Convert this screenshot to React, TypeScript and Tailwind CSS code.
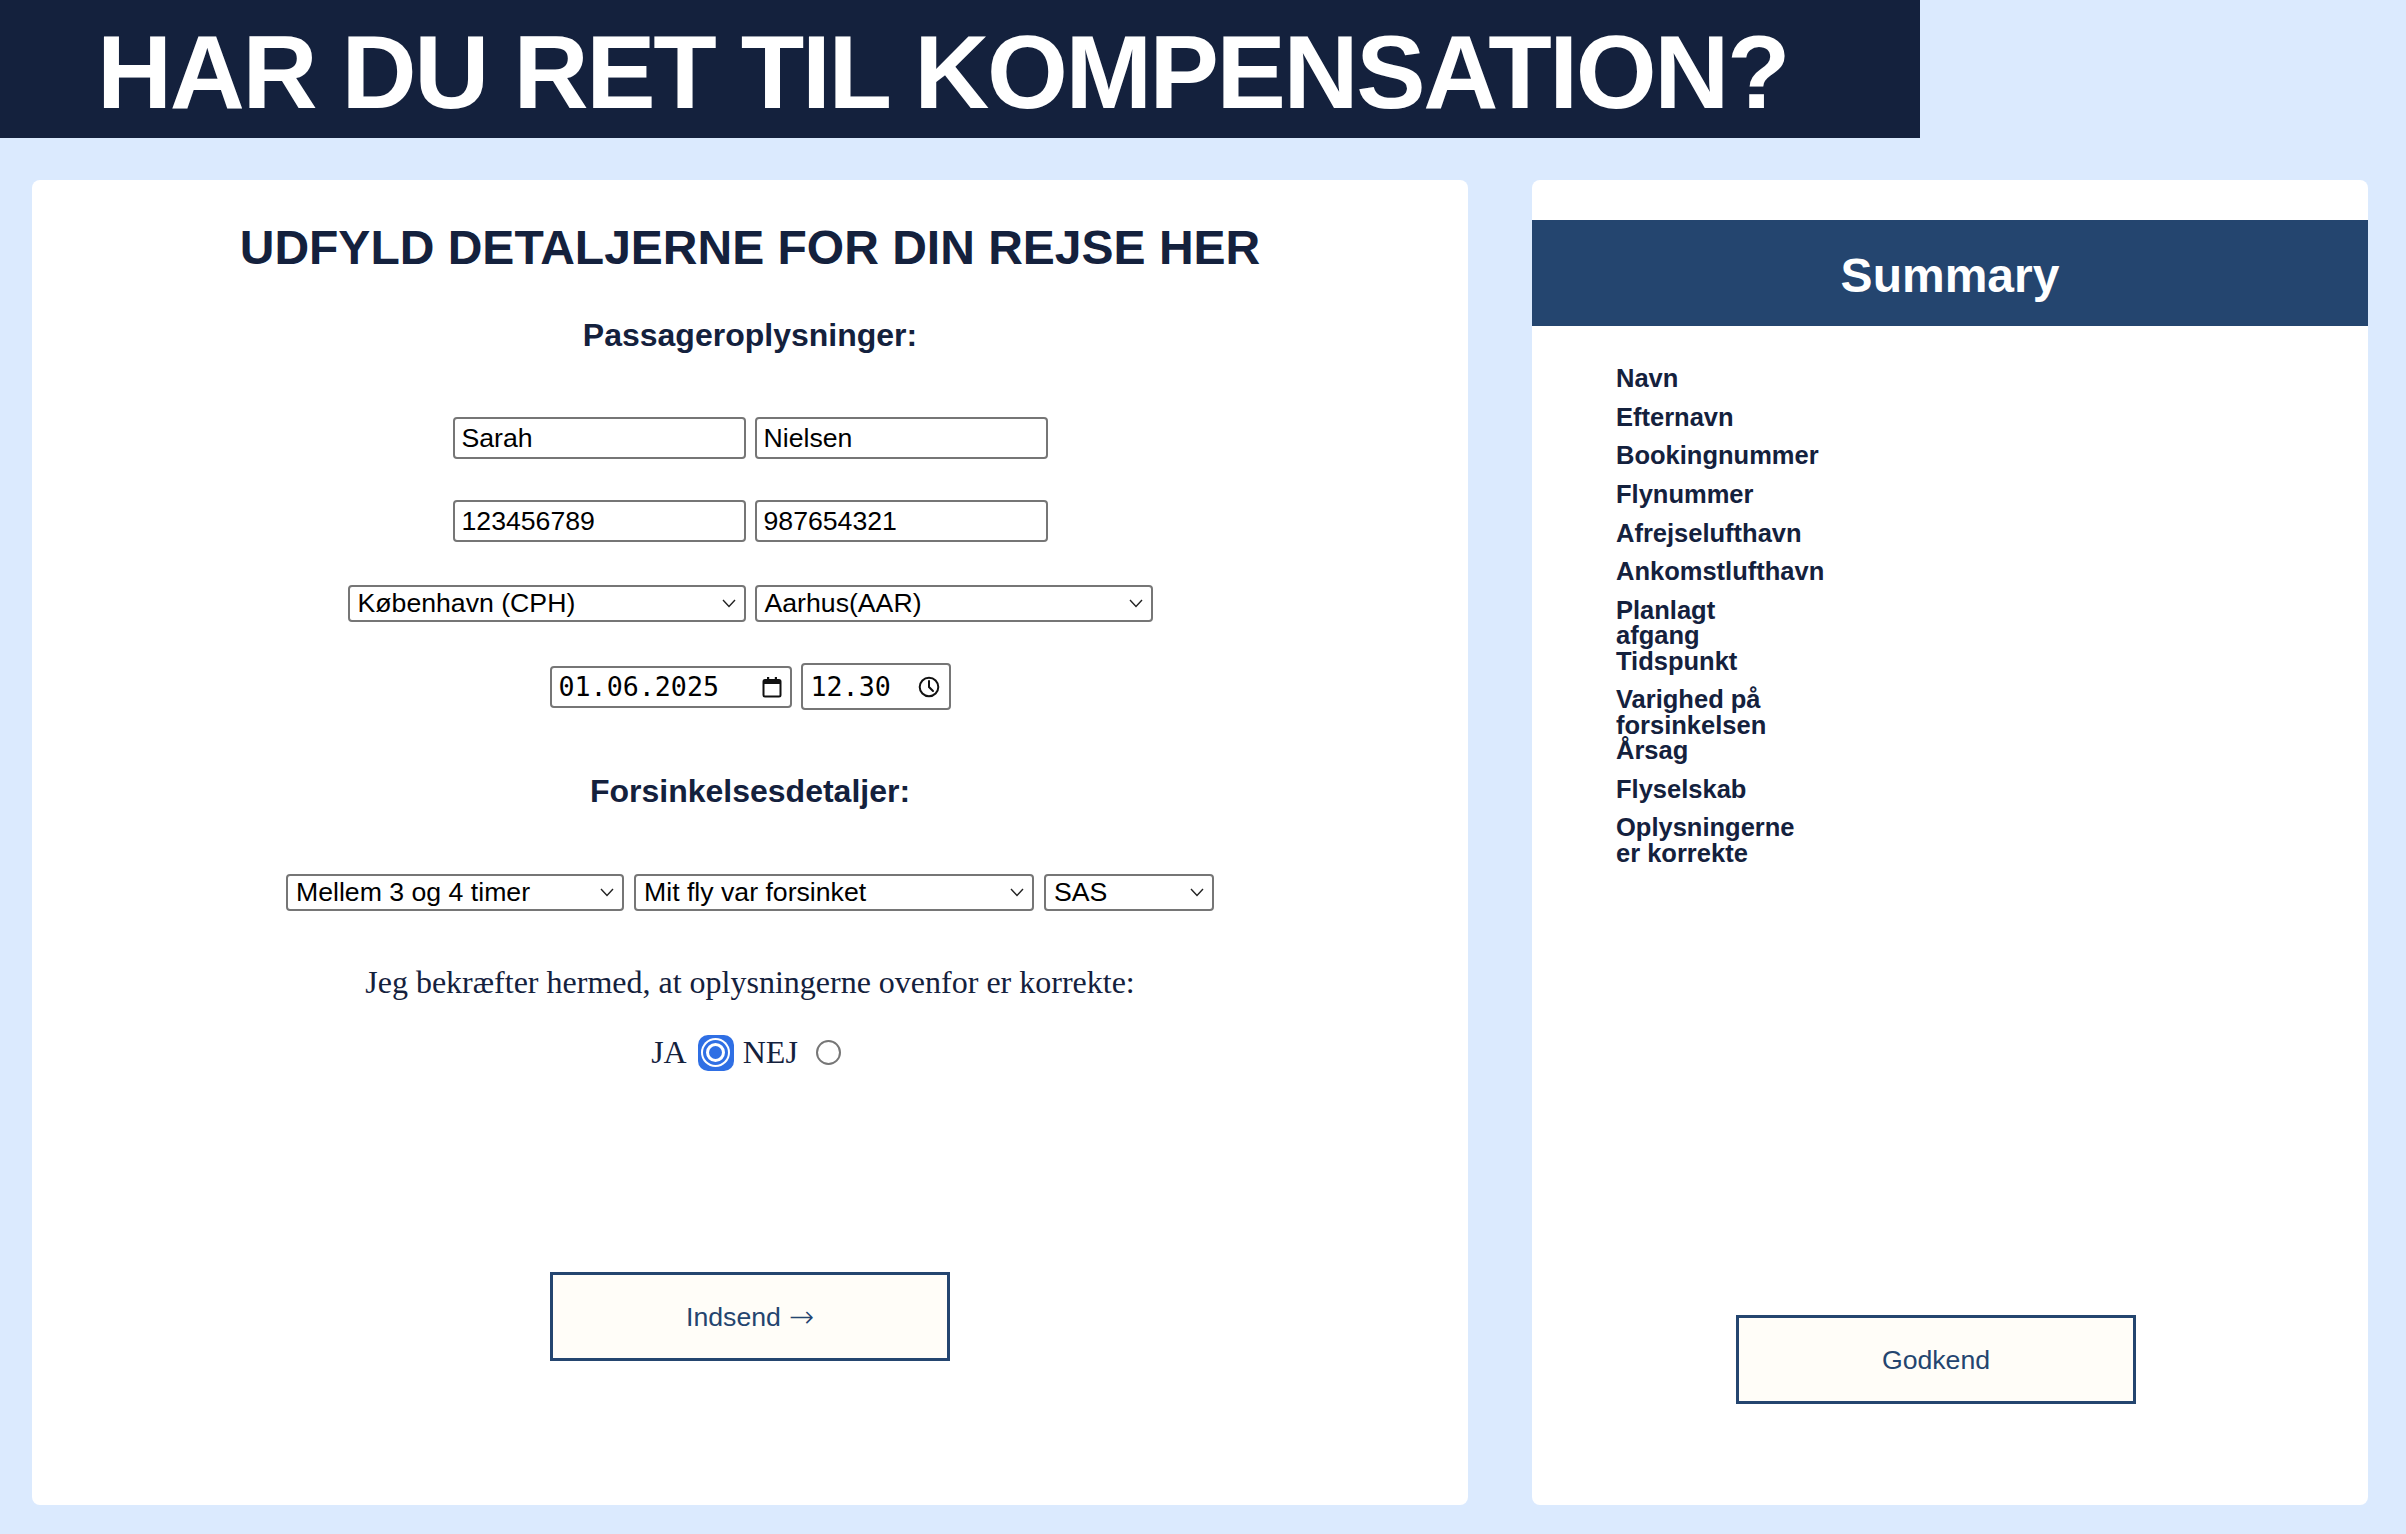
import React from 'react';

const navy = 'text-[#14213d]';

function Chevron() {
  return (
    <svg width="14" height="9" viewBox="0 0 14 9" fill="none">
      <polyline points="1,1 7,7.5 13,1" stroke="#222" strokeWidth="1.4" />
    </svg>
  );
}

function TextField({ value }: { value: string }) {
  return (
    <input
      defaultValue={value}
      className="h-[42px] w-[293px] rounded-[4px] border-2 border-[#767676] bg-white px-[7px] text-[26.67px] text-black outline-none"
    />
  );
}

function FakeSelect({ value, width }: { value: string; width: string }) {
  return (
    <div
      className={`flex h-[37px] items-center justify-between rounded-[4px] border-2 border-[#767676] bg-white pl-[8px] pr-[8px] text-[26.67px] leading-none text-black ${width}`}
    >
      <span>{value}</span>
      <Chevron />
    </div>
  );
}

function CalendarIcon() {
  return (
    <svg width="20" height="22" viewBox="0 0 20 22">
      <rect x="1.5" y="4" width="17" height="16.5" rx="1.5" fill="none" stroke="#111" strokeWidth="2" />
      <rect x="1.5" y="4" width="17" height="4" fill="#111" />
      <rect x="5" y="1" width="2.2" height="4" fill="#111" />
      <rect x="12.8" y="1" width="2.2" height="4" fill="#111" />
    </svg>
  );
}

function ClockIcon() {
  return (
    <svg width="22" height="22" viewBox="0 0 22 22" fill="none">
      <circle cx="11" cy="11" r="9.3" stroke="#111" strokeWidth="2" />
      <polyline points="11,5 11,11 15,15" stroke="#111" strokeWidth="2" strokeLinecap="round" />
    </svg>
  );
}

const summaryItems = [
  ['Navn'],
  ['Efternavn'],
  ['Bookingnummer'],
  ['Flynummer'],
  ['Afrejselufthavn'],
  ['Ankomstlufthavn'],
  ['Planlagt', 'afgang', 'Tidspunkt'],
  ['Varighed på', 'forsinkelsen', 'Årsag'],
  ['Flyselskab'],
  ['Oplysningerne', 'er korrekte'],
];

export default function App() {
  return (
    <div className="min-h-[1534px] bg-blue-100 [font-family:'Liberation_Sans',Arial,sans-serif]">
      <header className="h-[138px] w-[1920px] bg-[#14213d] pl-[97px] pt-[20px]">
        <h1 className="text-[104px] font-bold leading-none tracking-[-2.4px] text-white">
          HAR DU RET TIL KOMPENSATION?
        </h1>
      </header>

      <main className="flex gap-[64px] px-[32px] pt-[42px]">
        {/* form */}
        <section className="flex h-[1325px] w-[1436px] flex-col items-center rounded-lg bg-white pb-[144px] pt-[40px]">
          <h2 className={`text-[48px] font-bold leading-[55px] ${navy}`}>
            UDFYLD DETALJERNE FOR DIN REJSE HER
          </h2>
          <h3 className={`mt-[42px] text-[32px] font-bold leading-[37px] ${navy}`}>
            Passageroplysninger:
          </h3>

          <div className="mt-[63px] flex gap-[9px]">
            <TextField value="Sarah" />
            <TextField value="Nielsen" />
          </div>
          <div className="mt-[41px] flex gap-[9px]">
            <TextField value="123456789" />
            <TextField value="987654321" />
          </div>
          <div className="mt-[43px] flex gap-[9px]">
            <FakeSelect value="København (CPH)" width="w-[398px]" />
            <FakeSelect value="Aarhus(AAR)" width="w-[398px]" />
          </div>
          <div className="mt-[41px] flex items-center gap-[9px] text-[26.67px] text-black [font-family:'DejaVu_Sans_Mono',monospace]">
            <div className="flex h-[42px] w-[242px] items-center justify-between rounded-[4px] border-2 border-[#767676] pl-[7px] pr-[8px]">
              <span>01.06.2025</span>
              <CalendarIcon />
            </div>
            <div className="flex h-[47px] w-[150px] items-center justify-between rounded-[4px] border-2 border-[#767676] pl-[8px] pr-[9px]">
              <span>12.30</span>
              <ClockIcon />
            </div>
          </div>

          <h3 className={`mt-[63px] text-[32px] font-bold leading-[37px] ${navy}`}>
            Forsinkelsesdetaljer:
          </h3>
          <div className="mt-[64px] flex gap-[10px]">
            <FakeSelect value="Mellem 3 og 4 timer" width="w-[338px]" />
            <FakeSelect value="Mit fly var forsinket" width="w-[400px]" />
            <FakeSelect value="SAS" width="w-[170px]" />
          </div>

          <p className={`mt-[53px] text-[32px] leading-[37px] [font-family:'Liberation_Serif','Times_New_Roman',serif] ${navy}`}>
            Jeg bekræfter hermed, at oplysningerne ovenfor er korrekte:
          </p>
          <div className={`mt-[33px] flex items-center pr-[8px] text-[32px] leading-[37px] [font-family:'Liberation_Serif','Times_New_Roman',serif] ${navy}`}>
            <span>JA</span>
            <span className="ml-[11px] flex h-[36px] w-[36px] items-center justify-center rounded-[10px] bg-[#2f6fe4]">
              <span className="flex h-[29px] w-[29px] items-center justify-center rounded-full bg-white">
                <span className="flex h-[25px] w-[25px] items-center justify-center rounded-full border-[3px] border-[#2f6fe4] bg-white">
                  <span className="h-[13px] w-[13px] rounded-full bg-[#2f6fe4]" />
                </span>
              </span>
            </span>
            <span className="ml-[9px]">NEJ</span>
            <span className="ml-[18px] h-[25px] w-[25px] rounded-full border-2 border-[#767676] bg-white" />
          </div>

          <button className="mt-auto flex h-[89px] w-[400px] items-center justify-center gap-[8px] border-[3px] border-[#24456f] bg-[#fffdf8] text-[26.67px] text-[#24456f]">
            <span>Indsend</span>
            <span className="text-[30px] font-extralight [font-family:'DejaVu_Sans',sans-serif]">→</span>
          </button>
        </section>

        {/* summary */}
        <aside className="flex h-[1325px] w-[836px] flex-col rounded-lg bg-white pb-[101px] pt-[40px]">
          <div className="flex h-[106px] items-center justify-center bg-[#24456f] pt-[6px]">
            <h2 className="text-[48px] font-bold text-white">Summary</h2>
          </div>
          <dl className={`mt-[40px] flex flex-col gap-[13.4px] pl-[84px] text-[25.5px] font-bold leading-[25.3px] ${navy}`}>
            {summaryItems.map((lines) => (
              <dt key={lines[0]}>
                {lines.map((line) => (
                  <div key={line}>{line}</div>
                ))}
              </dt>
            ))}
          </dl>
          <button className="ml-[204px] mt-auto h-[89px] w-[400px] border-[3px] border-[#24456f] bg-[#fffdf8] text-[26.67px] text-[#24456f]">
            Godkend
          </button>
        </aside>
      </main>
    </div>
  );
}
